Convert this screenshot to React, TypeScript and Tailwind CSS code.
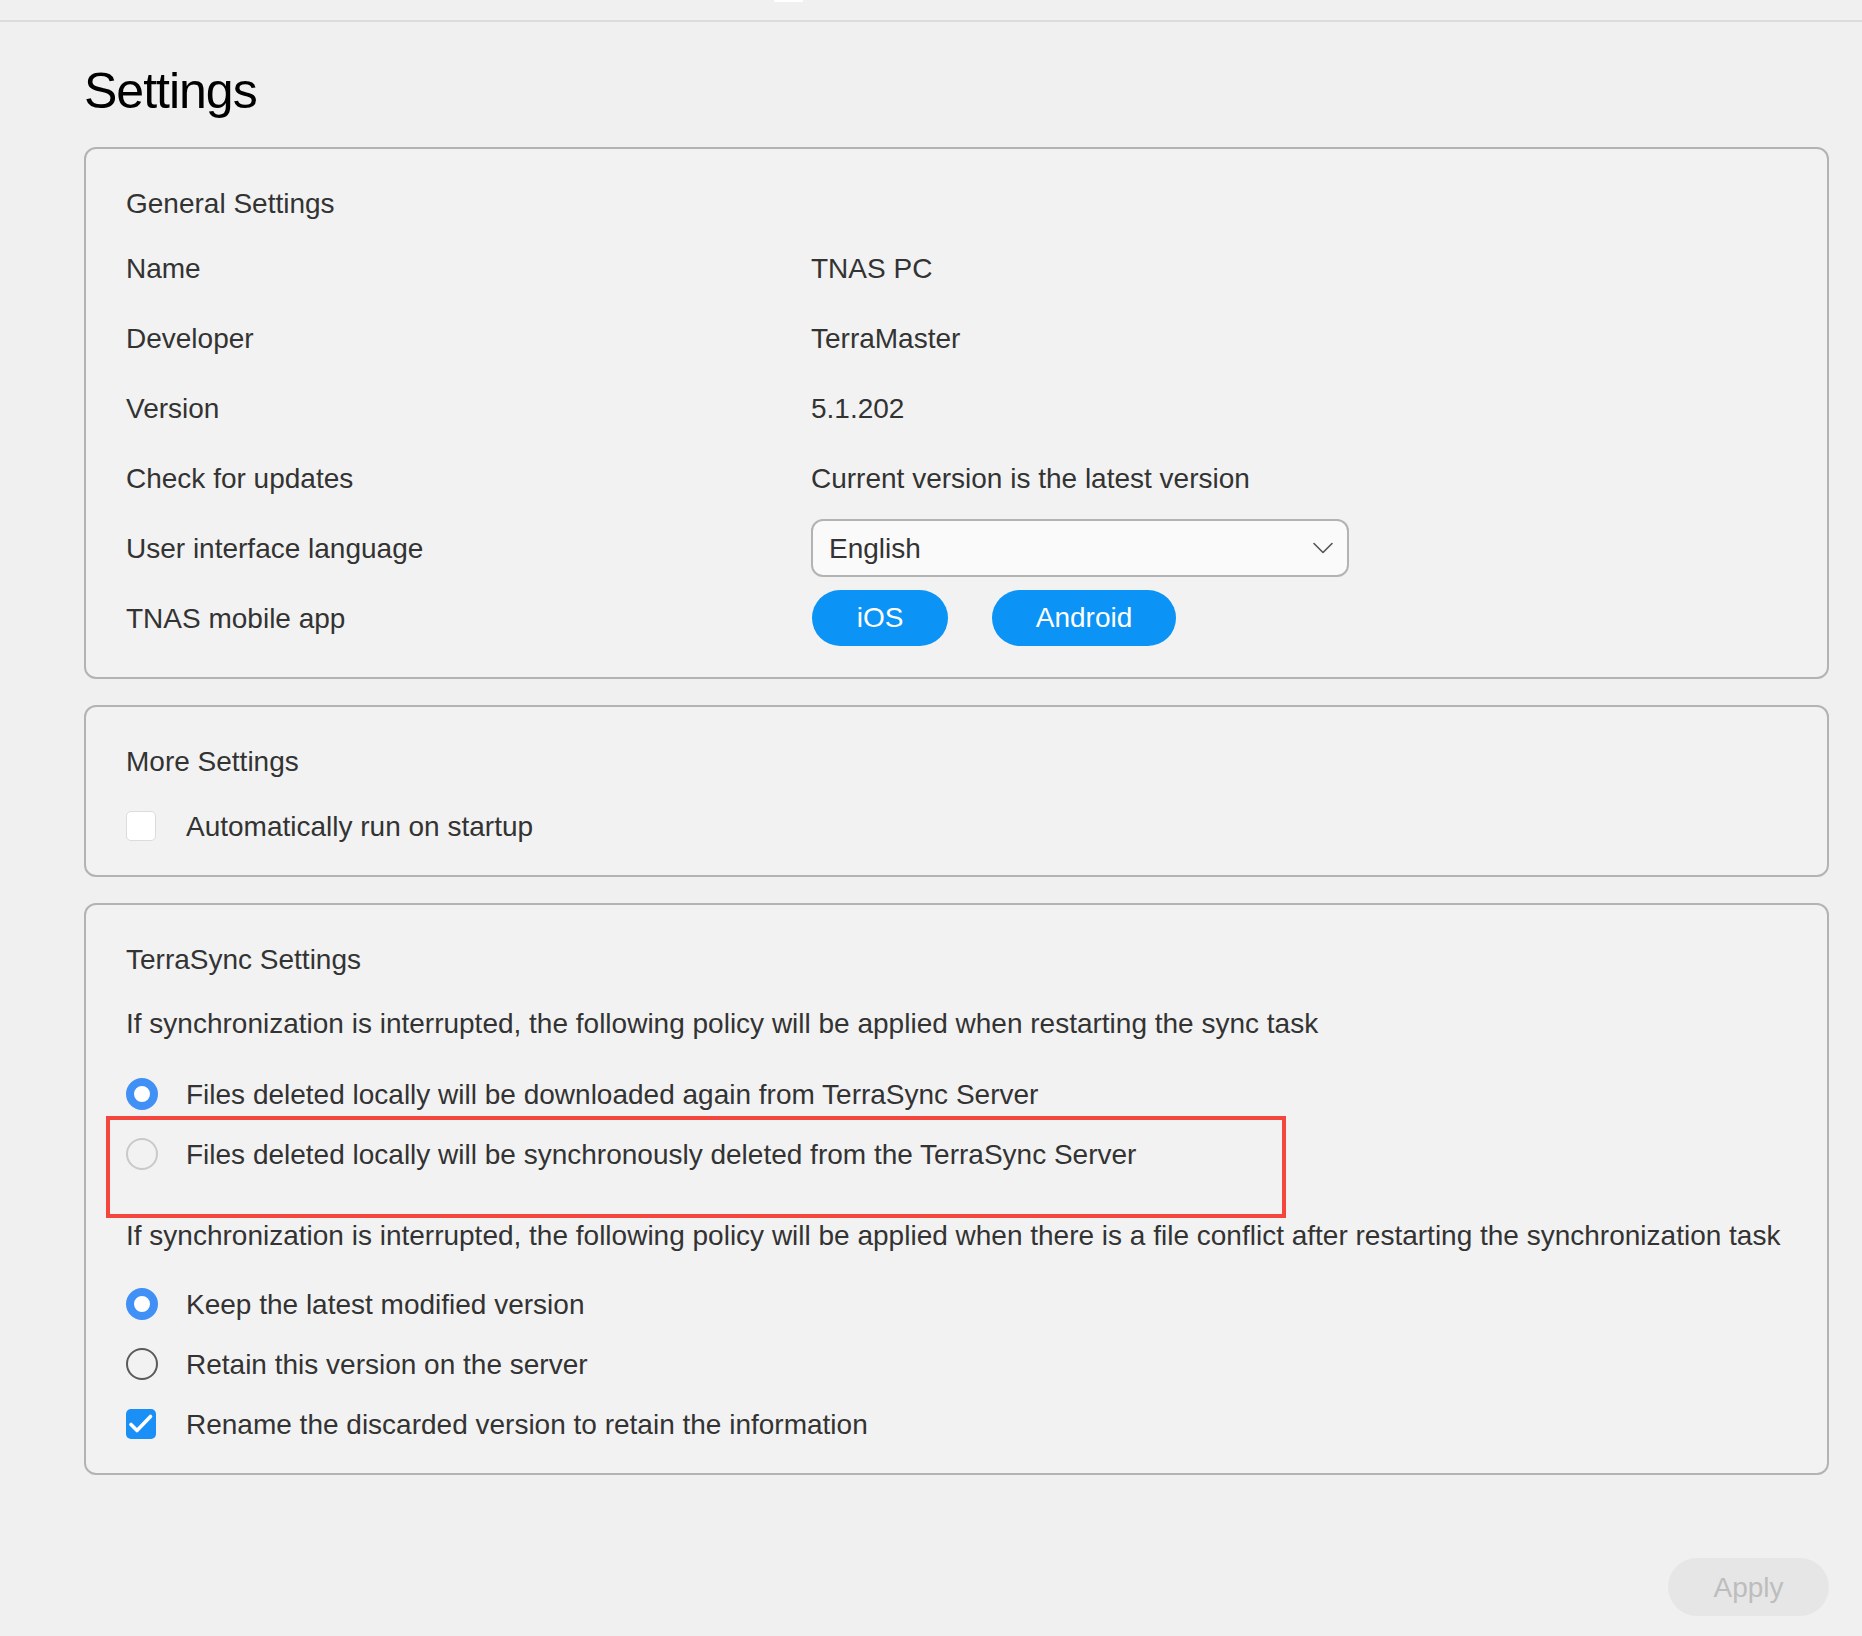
import React from "react";

function Row({ label, children }: { label: string; children: React.ReactNode }) {
  return (
    <div className="flex h-[70px] items-center">
      <div className="w-[685px] shrink-0 pt-[2px]">{label}</div>
      <div className="flex items-center">{children}</div>
    </div>
  );
}

function Radio({ kind }: { kind: "on" | "offLight" | "offDark" }) {
  if (kind === "on") {
    return <span className="block h-[32px] w-[32px] rounded-full border-[8px] border-[#4190f6] bg-white" />;
  }
  if (kind === "offLight") {
    return <span className="block h-[32px] w-[32px] rounded-full border-2 border-[#c9c9c9]" />;
  }
  return <span className="block h-[32px] w-[32px] rounded-full border-2 border-[#5a5a5a]" />;
}

function OptionLine({ control, text, className = "" }: { control: React.ReactNode; text: string; className?: string }) {
  return (
    <div className={"flex h-[34px] items-center " + className}>
      <div className="flex w-[60px] shrink-0 items-center">{control}</div>
      <div className="whitespace-nowrap pt-[2px]">{text}</div>
    </div>
  );
}

export default function App() {
  return (
    <div className="min-h-[1636px] w-full bg-[#f0f0f0] font-['Liberation_Sans',Helvetica,Arial,sans-serif] text-[28px] leading-[34px] text-[#333]">
      <div className="relative h-[22px] border-b-2 border-[#dcdcdc]">
        <div className="absolute left-[774px] top-0 h-[2px] w-[29px] bg-white" />
      </div>
      <div className="pl-[84px] pr-[33px]">
        <h1 className="mt-[39px] h-[60px] text-[50px] leading-[60px] tracking-[-1px] text-black">Settings</h1>

        <section className="mt-[26px] rounded-[12px] border-2 border-[#b3b3b3] bg-[#f2f2f2] pb-[24px] pl-[40px] pt-[37px]">
          <div className="h-[34px] pt-[1px]">General Settings</div>
          <div className="mt-[13px]">
            <Row label="Name"><span className="pt-[2px]">TNAS PC</span></Row>
            <Row label="Developer"><span className="pt-[2px]">TerraMaster</span></Row>
            <Row label="Version"><span className="pt-[2px]">5.1.202</span></Row>
            <Row label="Check for updates"><span className="pt-[2px]">Current version is the latest version</span></Row>
            <Row label="User interface language">
              <div className="flex h-[58px] w-[538px] items-center justify-between rounded-[12px] border-2 border-[#b3b3b3] bg-[#fafafa] pl-[16px] pr-[14px]">
                <span className="pt-[2px]">English</span>
                <svg width="20" height="12" viewBox="0 0 20 12" fill="none">
                  <path d="M1 1.5 L10 10.5 L19 1.5" stroke="#555" strokeWidth="1.6" strokeLinecap="round" strokeLinejoin="round" />
                </svg>
              </div>
            </Row>
            <Row label="TNAS mobile app">
              <div className="flex items-center gap-[44px] pl-[1px]">
                <button className="flex h-[56px] w-[136px] items-center justify-center rounded-full bg-[#0b93f6] text-white">iOS</button>
                <button className="flex h-[56px] w-[184px] items-center justify-center rounded-full bg-[#0b93f6] text-white">Android</button>
              </div>
            </Row>
          </div>
        </section>

        <section className="mt-[26px] rounded-[12px] border-2 border-[#b3b3b3] bg-[#f2f2f2] pb-[14px] pl-[40px] pt-[37px]">
          <div className="h-[34px] pt-[1px]">More Settings</div>
          <div className="mt-[13px] flex h-[70px] items-center">
            <div className="flex w-[60px] shrink-0 items-center">
              <span className="block h-[30px] w-[30px] rounded-[5px] border-[1.5px] border-[#dcdcdc] bg-white" />
            </div>
            <span className="pt-[2px]">Automatically run on startup</span>
          </div>
        </section>

        <section className="relative mt-[26px] rounded-[12px] border-2 border-[#b3b3b3] bg-[#f2f2f2] pb-[32px] pl-[40px] pt-[37px]">
          <div className="h-[34px] pt-[1px]">TerraSync Settings</div>
          <div className="mt-[30px] h-[34px] whitespace-nowrap pt-[1px]">
            If synchronization is interrupted, the following policy will be applied when restarting the sync task
          </div>
          <OptionLine className="mt-[37px]" control={<Radio kind="on" />} text="Files deleted locally will be downloaded again from TerraSync Server" />
          <OptionLine className="mt-[26px]" control={<Radio kind="offLight" />} text="Files deleted locally will be synchronously deleted from the TerraSync Server" />
          <div className="mt-[47px] h-[34px] whitespace-nowrap pt-[1px]">
            If synchronization is interrupted, the following policy will be applied when there is a file conflict after restarting the synchronization task
          </div>
          <OptionLine className="mt-[35px]" control={<Radio kind="on" />} text="Keep the latest modified version" />
          <OptionLine className="mt-[26px]" control={<Radio kind="offDark" />} text="Retain this version on the server" />
          <OptionLine
            className="mt-[26px]"
            control={
              <span className="flex h-[30px] w-[30px] items-center justify-center rounded-[5px] bg-[#1a8ff5]">
                <svg width="30" height="30" viewBox="0 0 30 30" fill="none">
                  <path d="M5 15.5 L11 21.5 L24.5 7.5" stroke="white" strokeWidth="3.6" strokeLinecap="round" strokeLinejoin="round" />
                </svg>
              </span>
            }
            text="Rename the discarded version to retain the information"
          />
          <div className="pointer-events-none absolute left-[20px] top-[211px] h-[102px] w-[1180px] border-[4px] border-[#f4463c]" />
        </section>

        <div className="mt-[83px] flex justify-end">
          <button className="flex h-[58px] w-[161px] items-center justify-center rounded-full bg-[#e6e6e6] pt-[2px] text-[#bdbdbd]">Apply</button>
        </div>
      </div>
    </div>
  );
}
